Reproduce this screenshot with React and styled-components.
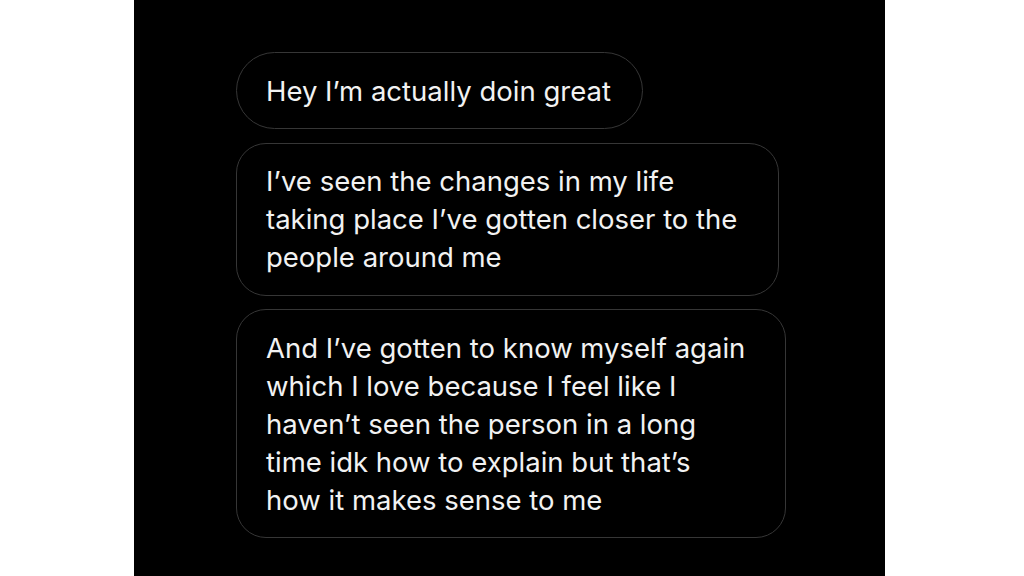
import React from 'react';
import styled, { createGlobalStyle } from 'styled-components';

const GlobalStyle = createGlobalStyle`
  html, body {
    margin: 0;
    padding: 0;
    background: #ffffff;
  }
`;

const Page = styled.div`
  width: 1024px;
  height: 576px;
  overflow: hidden;
  background: #ffffff;
`;

const Panel = styled.div`
  margin-left: 134px;
  width: 751px;
  height: 576px;
  background: #000000;
  box-sizing: border-box;
  padding: 52px 0 0 102px;
  display: flex;
  flex-direction: column;
  align-items: flex-start;
  gap: 13.5px;
  font-family: Inter, "Open Sans", sans-serif;
`;

const Bubble = styled.div`
  width: fit-content;
  box-sizing: border-box;
  padding: 18.5px ${(p) => p.$padRight}px 18.5px 29px;
  border: 1.5px solid #363636;
  border-radius: ${(p) => (p.$pill ? '40px' : '30px')};
  background: #000000;
  color: #f2f2f2;
  font-size: 27.5px;
  line-height: 38px;
`;

const Line = styled.span`
  display: block;
  white-space: nowrap;
`;

const messages = [
  { pill: true, padRight: 31, lines: ['Hey I\u2019m actually doin great'] },
  {
    padRight: 41,
    lines: [
      'I\u2019ve seen the changes in my life',
      'taking place I\u2019ve gotten closer to the',
      'people around me',
    ],
  },
  {
    padRight: 40,
    lines: [
      'And I\u2019ve gotten to know myself again',
      'which I love because I feel like I',
      'haven\u2019t seen the person in a long',
      'time idk how to explain but that\u2019s',
      'how it makes sense to me',
    ],
  },
];

export default function App() {
  return (
    <Page>
      <GlobalStyle />
      <Panel>
        {messages.map((m, i) => (
          <Bubble key={i} $pill={m.pill} $padRight={m.padRight}>
            {m.lines.map((l) => (
              <Line key={l}>{l}</Line>
            ))}
          </Bubble>
        ))}
      </Panel>
    </Page>
  );
}
